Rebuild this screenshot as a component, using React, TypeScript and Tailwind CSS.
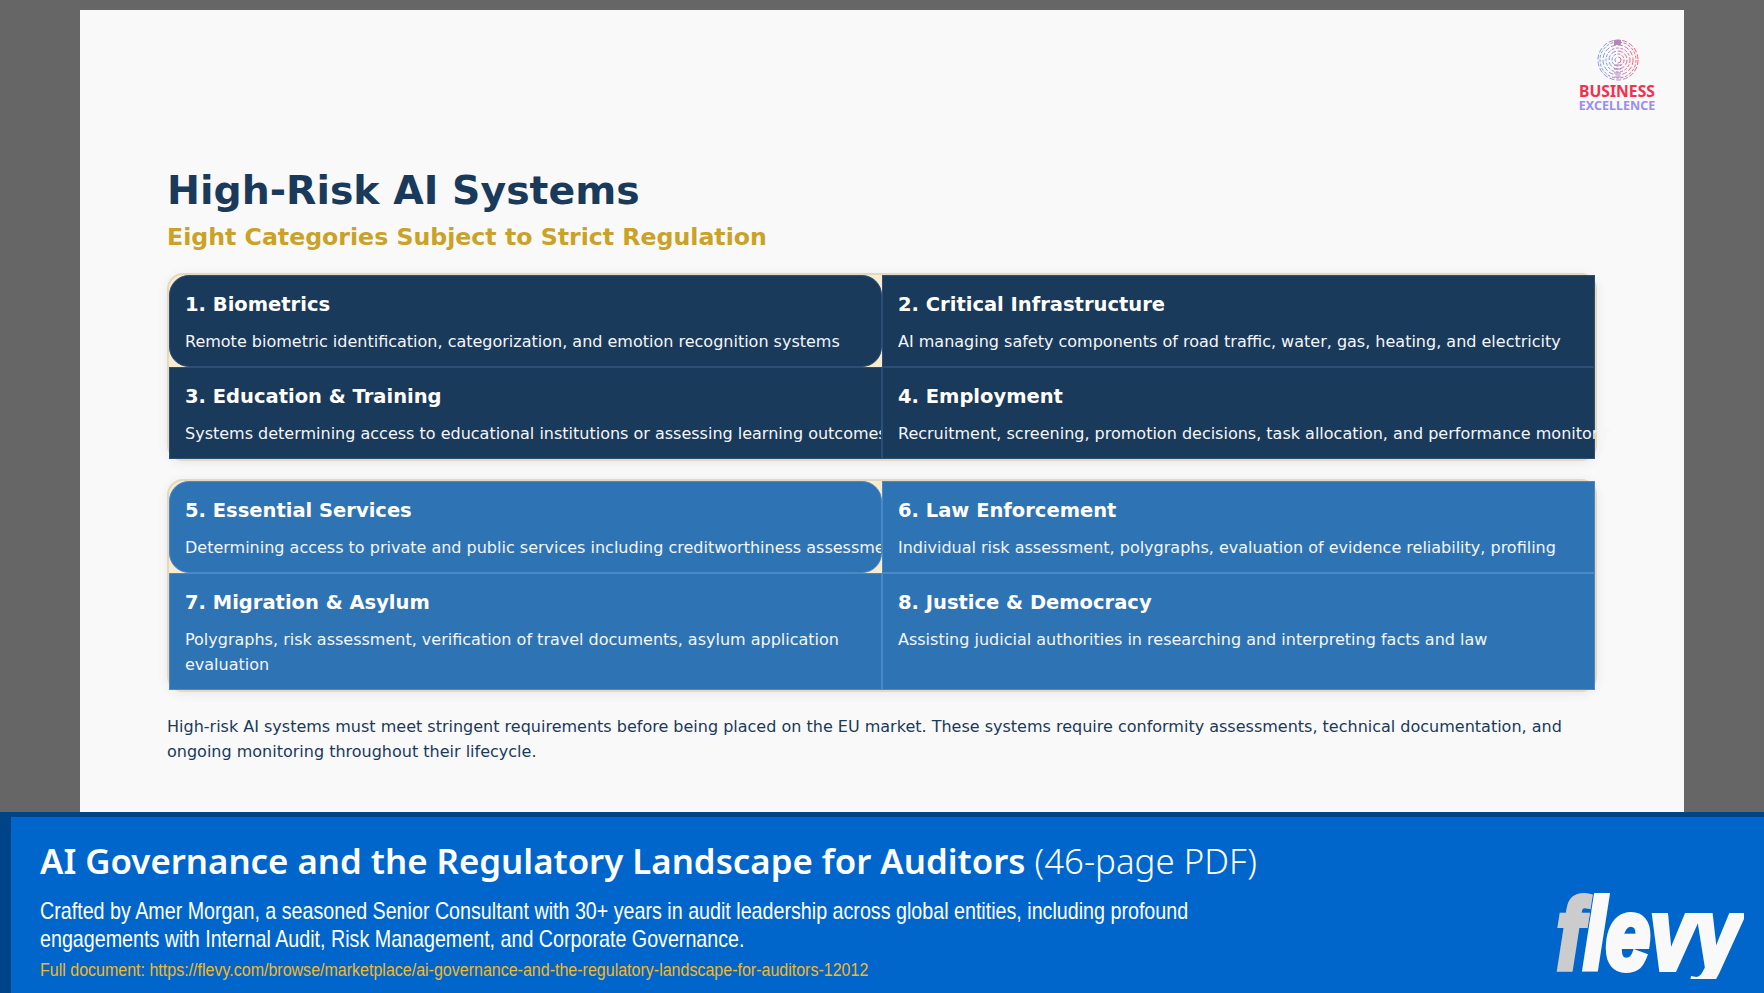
const cells1 = [
  { title: '1. Biometrics', text: 'Remote biometric identification, categorization, and emotion recognition systems', extra: 'rounded-[20px]' },
  { title: '2. Critical Infrastructure', text: 'AI managing safety components of road traffic, water, gas, heating, and electricity', extra: '' },
  { title: '3. Education & Training', text: 'Systems determining access to educational institutions or assessing learning outcomes', extra: 'overflow-hidden whitespace-nowrap' },
  { title: '4. Employment', text: 'Recruitment, screening, promotion decisions, task allocation, and performance monitoring', extra: 'overflow-clip [overflow-clip-margin:16px] whitespace-nowrap' },
];

const cells2 = [
  { title: '5. Essential Services', text: 'Determining access to private and public services including creditworthiness assessment', extra: 'rounded-[20px] overflow-hidden whitespace-nowrap' },
  { title: '6. Law Enforcement', text: 'Individual risk assessment, polygraphs, evaluation of evidence reliability, profiling', extra: '' },
  { title: '7. Migration & Asylum', text: 'Polygraphs, risk assessment, verification of travel documents, asylum application evaluation', extra: '' },
  { title: '8. Justice & Democracy', text: 'Assisting judicial authorities in researching and interpreting facts and law', extra: '' },
];

function Grid({ cells, cellClass }: { cells: typeof cells1; cellClass: string }) {
  return (
    <div className="grid grid-cols-2 rounded-[16px] border-2 border-[#e4d9bf] bg-[#f8ebcf] shadow-[0_2px_12px_rgba(0,0,0,0.07)]">
      {cells.map((c) => (
        <div key={c.title} className={`min-w-0 border px-[15px] pt-[14px] pb-[12px] ${cellClass} ${c.extra}`}>
          <h3 className="mb-[9px] text-[19.5px] leading-[30px] font-bold text-white">{c.title}</h3>
          <p className="text-[16px] leading-[25px] text-[#f4f6f9]">{c.text}</p>
        </div>
      ))}
    </div>
  );
}

function LogoMark() {
  const radii = [3, 6, 9, 12, 15, 18, 20];
  return (
    <svg width="42" height="42" viewBox="0 0 42 42" fill="none" className="ml-[1px] opacity-75">
      <defs>
        <linearGradient id="fp" x1="0" y1="0" x2="1" y2="0">
          <stop offset="0" stopColor="#4f7fe8" />
          <stop offset="0.5" stopColor="#a050b0" />
          <stop offset="1" stopColor="#f03058" />
        </linearGradient>
      </defs>
      {radii.map((r, i) => (
        <circle key={r} cx="21" cy="21" r={r} stroke="url(#fp)" strokeWidth="1" strokeDasharray={i % 2 ? '3 1.5' : '5 2'} />
      ))}
      <rect x="17" y="1" width="7" height="5" fill="#a0609f" />
      <path d="M17 26h7M17 30h7M17 34h7M17 38h7" stroke="#a050a8" strokeWidth="1" />
    </svg>
  );
}

export default function App() {
  return (
    <div className="flex h-[993px] w-[1764px] flex-col overflow-hidden bg-[#666666] font-['DejaVu_Sans',sans-serif]">
      {/* Slide */}
      <div className="relative mx-[80px] mt-[10px] min-h-0 flex-1 bg-[#f9f9f9] px-[87px] pt-[155px]">
        <div className="absolute top-[29px] right-[29px] flex w-[76px] flex-col items-center font-['Noto_Sans',sans-serif] font-bold">
          <LogoMark />
          <span className="mt-[2px] text-[15.7px] leading-[16px] text-[#f4304f]">BUSINESS</span>
          <span className="text-[12.5px] leading-[13px] text-[#9b8cf5]">EXCELLENCE</span>
        </div>
        <h1 className="text-[39.4px] leading-[50px] font-bold text-[#1a3a5c]">High-Risk AI Systems</h1>
        <h2 className="mt-[6px] mb-[20px] text-[23.65px] leading-[32px] font-bold text-[#c9a227]">Eight Categories Subject to Strict Regulation</h2>
        <Grid cells={cells1} cellClass="bg-[#1a3a5c] border-[#2d4f75]" />
        <div className="h-[18px]" />
        <Grid cells={cells2} cellClass="bg-[#2e74b5] border-[#4a88c7]" />
        <p className="mt-[22px] text-[16px] leading-[25px] text-[#1a3a5c]">
          High-risk AI systems must meet stringent requirements before being placed on the EU market. These systems require conformity assessments, technical documentation, and ongoing monitoring throughout their lifecycle.
        </p>
      </div>

      {/* Banner */}
      <div className="flex h-[181px] shrink-0 items-start justify-between overflow-hidden border-t-[5px] border-l-[11px] border-[#004488] bg-[#0066cc] pt-[19px] pr-[20px] pl-[29px]">
        <div className="min-w-0 text-white">
          <div className="font-['Noto_Sans',sans-serif] text-[34.8px] leading-[50px] whitespace-nowrap">
            <span className="font-semibold">AI Governance and the Regulatory Landscape for Auditors</span>{' '}
            <span className="font-light">(46-page PDF)</span>
          </div>
          <div className="mt-[11px] origin-left scale-x-[0.82] font-['Liberation_Sans',sans-serif] text-[24px] leading-[28px] whitespace-nowrap">
            <div>Crafted by Amer Morgan, a seasoned Senior Consultant with 30+ years in audit leadership across global entities, including profound</div>
            <div>engagements with Internal Audit, Risk Management, and Corporate Governance.</div>
          </div>
          <div className="mt-[5px] origin-left scale-x-[0.915] font-['Liberation_Sans',sans-serif] text-[17.5px] leading-[24px] whitespace-nowrap text-[#f5b81f]">
            Full document: https://flevy.com/browse/marketplace/ai-governance-and-the-regulatory-landscape-for-auditors-12012
          </div>
        </div>
        {/* logo is clipped under the baseline so the tail of the y stays short */}
        <div className="mt-[48px] mr-[0px] h-[95px] shrink-0 origin-right scale-x-[0.8] overflow-hidden px-[6px] font-['Liberation_Sans',sans-serif] text-[100px] leading-[100px] font-bold italic text-[#f9f9f9] [-webkit-text-stroke:6px_currentColor]">
          <span className="text-[#cccccc]">f</span>levy
        </div>
      </div>
    </div>
  );
}
